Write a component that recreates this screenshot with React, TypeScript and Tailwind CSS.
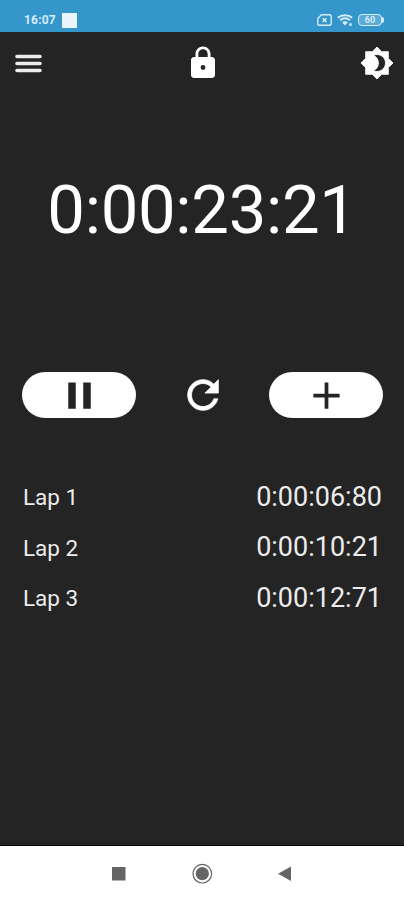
import { useState } from 'react';
import { MdAdd, MdPause } from 'react-icons/md';

const laps = [
  { name: 'Lap 1', time: '0:00:06:80' },
  { name: 'Lap 2', time: '0:00:10:21' },
  { name: 'Lap 3', time: '0:00:12:71' },
];

function StatusBar() {
  return (
    <div className="flex h-8 shrink-0 items-center bg-[#3496cb] pt-2 pr-[20px] pl-6 text-[#d5edf9]">
      <span className="text-[12px] leading-none font-bold tracking-[0.2px]">16:07</span>
      <span className="ml-[6px] h-[15px] w-[15px] bg-[#e9f5fb]"></span>
      <div className="ml-auto flex items-center">
        {/* SIM */}
        <svg className="h-3 w-[15px]" viewBox="0 0 15 12" fill="none" stroke="currentColor">
          <path d="M4.500.8h8.200c.9 0 1.500.6 1.500 1.500v7.400c0 .9-.6 1.500-1.500 1.500H2.300c-.9 0-1.500-.6-1.500-1.500V4.500z" strokeWidth="1.400" />
          <path d="M5.700 4.200l3.800 3.800M9.500 4.200L5.700 8" strokeWidth="1.600" />
        </svg>
        {/* Wifi */}
        <svg className="ml-[5px] h-3 w-4" viewBox="0 0 16 12" fill="none" stroke="currentColor">
          <path d="M.8 3.700c4-3.400 10.400-3.400 14.400 0M3.200 6.300c2.900-2.400 6.700-2.400 9.600 0" strokeWidth="2" />
          <path d="M5.100 8.200c1.600-1.300 4.200-1.300 5.800 0L8 11.500z" fill="currentColor" stroke="none" />
          <path d="M12.200 10.500h2.600" strokeWidth="2.400" />
        </svg>
        {/* Battery */}
        <div className="ml-[5px] flex h-3 w-[24px] items-center justify-center rounded-[4px] border-[1.5px] border-current bg-white/20 text-[9px] leading-none font-bold">
          60
        </div>
        <span className="h-1.5 w-[2px] rounded-r-full bg-current"></span>
      </div>
    </div>
  );
}

export default function App() {
  const [running, setRunning] = useState(true);

  return (
    <div className="flex h-[900px] w-[404px] flex-col overflow-hidden bg-[#242424] font-[Roboto,sans-serif] text-white">
      <StatusBar />

      {/* Toolbar */}
      <header className="flex h-[62px] shrink-0 items-center justify-between pr-[10px] pl-[11px]">
        <button aria-label="Menu">
          <svg className="h-[35px] w-[35px]" viewBox="0 0 35 35" stroke="#ececec" strokeWidth="3.600" strokeLinecap="round">
            <path d="M6 10.500h23M6 17.500h23M6 24.500h23" />
          </svg>
        </button>
        <button aria-label="Lock" className="-ml-[1px]">
          <svg className="h-9 w-9" viewBox="0 0 24 24" fill="currentColor">
            <path
              fillRule="evenodd"
              d="M18 8h-1V6c0-2.760-2.240-5-5-5S7 3.240 7 6v2H6c-1.100 0-2 .9-2 2v10c0 1.100.9 2 2 2h12c1.100 0 2-.9 2-2V10c0-1.100-.9-2-2-2zM12 16.600a1.600 1.600 0 1 1 0-3.200a1.600 1.600 0 0 1 0 3.200zM15.100 8H8.900V6c0-1.710 1.390-3.100 3.100-3.100s3.100 1.390 3.100 3.100z"
            />
          </svg>
        </button>
        <button aria-label="Theme">
          <svg className="h-[34px] w-[34px]" viewBox="0 0 24 24" fill="currentColor" stroke="currentColor" strokeWidth="0.6">
            <path d="M20 8.690V4h-4.690L12 .690 8.690 4H4v4.690L.690 12 4 15.310V20h4.690L12 23.310 15.310 20H20v-4.690L23.310 12 20 8.690zM12 18c-.890 0-1.740-.2-2.500-.550C11.560 16.500 13 14.420 13 12s-1.440-4.500-3.500-5.450C10.260 6.200 11.110 6 12 6c3.310 0 6 2.690 6 6s-2.690 6-6 6z" />
          </svg>
        </button>
      </header>

      {/* Elapsed time */}
      <div className="flex h-[232px] shrink-0 items-center justify-center text-[67px] leading-none tracking-[-0.3px]">
        0:00:23:21
      </div>

      {/* Controls */}
      <div className="mt-[46px] flex h-[46px] shrink-0 items-center justify-between pr-[21px] pl-[22px]">
        <button
          aria-label="Pause"
          onClick={() => setRunning(!running)}
          className="flex h-[46px] w-[114px] items-center justify-center rounded-full bg-white text-[#242424]"
        >
          <MdPause className="h-[45px] w-[45px]" />
        </button>
        <button aria-label="Reset">
          <svg className="h-[46px] w-[46px]" viewBox="0 0 24 24" fill="currentColor" stroke="currentColor" strokeWidth="0.4">
            <path d="M17.650 6.350C16.200 4.900 14.210 4 12 4c-4.420 0-7.990 3.580-7.990 8s3.570 8 7.990 8c3.730 0 6.840-2.550 7.730-6h-2.080c-.820 2.330-3.040 4-5.650 4-3.310 0-6-2.690-6-6s2.690-6 6-6c1.660 0 3.140.690 4.220 1.780L13 11h7V4l-2.350 2.350z" />
          </svg>
        </button>
        <button
          aria-label="Add lap"
          className="flex h-[46px] w-[114px] items-center justify-center rounded-full bg-white text-[#242424]"
        >
          <MdAdd className="h-[45px] w-[45px]" />
        </button>
      </div>

      {/* Laps */}
      <ul className="mt-[54px] flex-1 pr-[22px] pl-[23px] text-[#ececec]">
        {laps.map((lap) => (
          <li key={lap.name} className="flex h-[50.5px] items-center justify-between">
            <span className="text-[22.5px] leading-none">{lap.name}</span>
            <span className="text-[27px] leading-none">{lap.time}</span>
          </li>
        ))}
      </ul>

      {/* Navigation bar */}
      <nav className="h-[55px] shrink-0 border-t border-black bg-white">
        <svg className="h-[54px] w-full" viewBox="0 0 404 54" fill="#656565">
          <rect x="112" y="21" width="13.500" height="13.500" />
          <circle cx="202.300" cy="27.700" r="6.600" />
          <circle cx="202.300" cy="27.700" r="9.300" fill="none" stroke="#656565" strokeWidth="1.200" />
          <path d="M278 27.800l13-7.300v14.600z" />
        </svg>
      </nav>
    </div>
  );
}
